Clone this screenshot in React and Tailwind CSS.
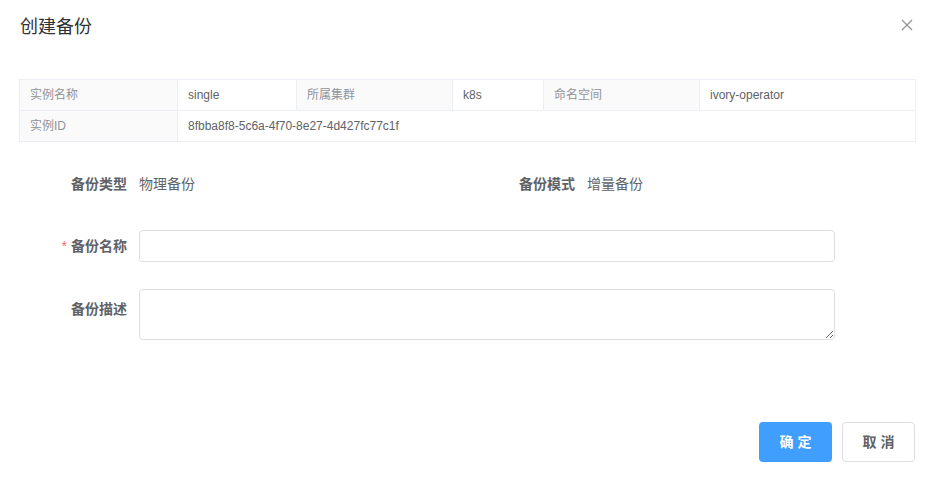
import React from 'react';

const font = { fontFamily: '"Liberation Sans", "Noto Sans CJK SC", sans-serif' };

export default function App() {
  return (
    <div className="w-[930px] h-[480px] bg-white relative" style={font}>
      <div className="flex items-center justify-between px-5 pt-[15px] h-[39px]">
        <h1 className="text-[18px] leading-6 text-[#303133]">创建备份</h1>
        <button className="mr-[-3px] mb-1 text-[#909399]">
          <svg width="12" height="12" viewBox="0 0 12 12" fill="none" stroke="currentColor" strokeWidth="1.3">
            <path d="M1 1L11 11M11 1L1 11" />
          </svg>
        </button>
      </div>

      <div className="pl-[19px] pr-[15px] pt-10">
        <InfoTable />

        <div className="w-[816px] mt-[26px]">
          <div className="flex h-8 items-center">
            <div className="w-[448px] flex items-center">
              <Label>备份类型</Label>
              <span className="text-[14px] text-[#606266]">物理备份</span>
            </div>
            <div className="flex items-center">
              <Label>备份模式</Label>
              <span className="text-[14px] text-[#606266]">增量备份</span>
            </div>
          </div>

          <div className="flex items-center mt-[30px]">
            <Label required>备份名称</Label>
            <input className="w-[696px] h-8 border border-[#dcdfe6] rounded px-[15px] text-[14px] text-[#606266] outline-none" />
          </div>

          <div className="flex items-start mt-[27px]">
            <div className="pt-1">
              <Label>备份描述</Label>
            </div>
            <textarea className="w-[696px] h-[51px] border border-[#dcdfe6] rounded px-[15px] py-[5px] text-[14px] text-[#606266] outline-none block" />
          </div>
        </div>
      </div>

      <div className="absolute right-[15px] bottom-[18px] flex gap-[10px]">
        <button className="w-[73px] h-10 rounded bg-[#409eff] text-white text-[14px] font-bold tracking-[4px] pl-[4px]">确定</button>
        <button className="w-[73px] h-10 rounded border border-[#dcdfe6] bg-white text-[#606266] text-[14px] font-bold tracking-[4px] pl-[4px]">取消</button>
      </div>
    </div>
  );
}

const Label = ({ children, required }) => (
  <label className="block w-[120px] pr-3 text-right text-[14px] font-bold text-[#606266] leading-8 shrink-0">
    {required && <span className="text-[#f56c6c] mr-1 font-normal">*</span>}
    {children}
  </label>
);

const InfoTable = () => {
  const lab = 'bg-[#fafafa] text-[#909399] border border-[#ebeef5] px-[10px] h-[31px] text-[12px] text-left font-normal';
  const val = 'bg-white text-[#606266] border border-[#ebeef5] px-[10px] h-[31px] text-[12px] text-left';
  return (
    <table className="w-[896px] border-collapse table-fixed">
      <colgroup>
        <col className="w-[158px]" />
        <col className="w-[119px]" />
        <col className="w-[156px]" />
        <col className="w-[91px]" />
        <col className="w-[156px]" />
        <col className="w-[216px]" />
      </colgroup>
      <tbody>
        <tr>
          <td className={lab}>实例名称</td>
          <td className={val}>single</td>
          <td className={lab}>所属集群</td>
          <td className={val}>k8s</td>
          <td className={lab}>命名空间</td>
          <td className={val}>ivory-operator</td>
        </tr>
        <tr>
          <td className={lab}>实例ID</td>
          <td className={val} colSpan={5}>8fbba8f8-5c6a-4f70-8e27-4d427fc77c1f</td>
        </tr>
      </tbody>
    </table>
  );
};
